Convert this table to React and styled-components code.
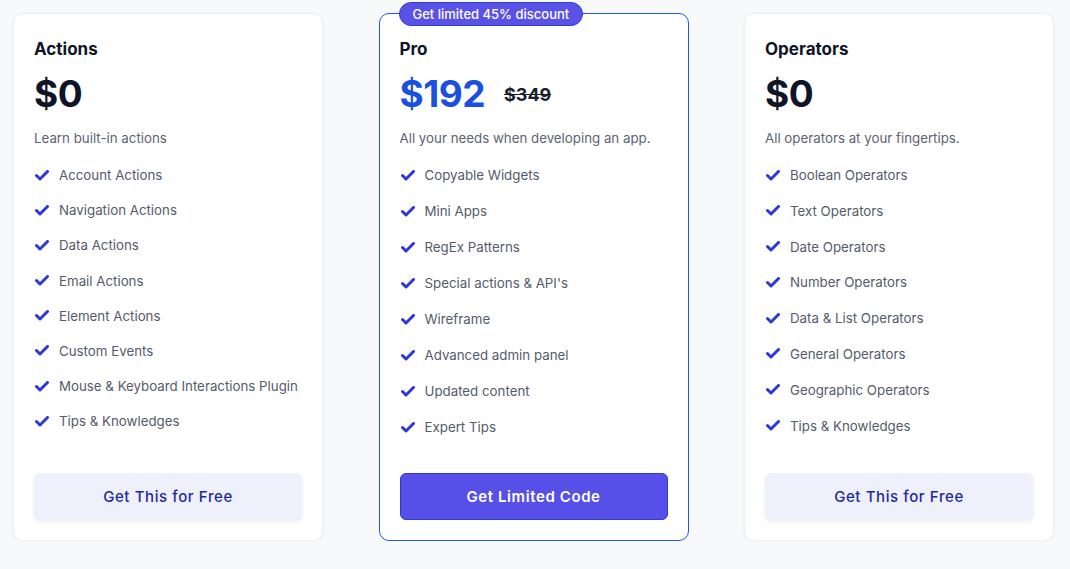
import React from "react";
import styled, { createGlobalStyle } from "styled-components";

const plans = [
  {
    name: "Actions",
    price: "$0",
    note: "Learn built-in actions",
    features: [
      "Account Actions",
      "Navigation Actions",
      "Data Actions",
      "Email Actions",
      "Element Actions",
      "Custom Events",
      "Mouse & Keyboard Interactions Plugin",
      "Tips & Knowledges",
    ],
    cta: "Get This for Free",
    rowGap: 15.2,
  },
  {
    name: "Pro",
    price: "$192",
    oldPrice: "$349",
    badge: "Get limited 45% discount",
    note: "All your needs when developing an app.",
    features: [
      "Copyable Widgets",
      "Mini Apps",
      "RegEx Patterns",
      "Special actions & API's",
      "Wireframe",
      "Advanced admin panel",
      "Updated content",
      "Expert Tips",
    ],
    cta: "Get Limited Code",
    featured: true,
    rowGap: 16,
  },
  {
    name: "Operators",
    price: "$0",
    note: "All operators at your fingertips.",
    features: [
      "Boolean Operators",
      "Text Operators",
      "Date Operators",
      "Number Operators",
      "Data & List Operators",
      "General Operators",
      "Geographic Operators",
      "Tips & Knowledges",
    ],
    cta: "Get This for Free",
    rowGap: 15.8,
  },
];

const Check = () => (
  <svg width="14" height="11" viewBox="0 0 14 11">
    <path
      d="M1.5 5.5 L5 9 L12.5 1.5"
      fill="none"
      stroke="#2c39d6"
      strokeWidth="3"
      strokeLinecap="round"
      strokeLinejoin="round"
    />
  </svg>
);

export default function App() {
  return (
    <>
      <GlobalStyle />
      <Page>
        {plans.map((plan) => (
          <Card key={plan.name} $featured={plan.featured}>
            {plan.badge && <Badge>{plan.badge}</Badge>}
            <PlanName>{plan.name}</PlanName>
            <PriceRow>
              <Price $featured={plan.featured}>{plan.price}</Price>
              {plan.oldPrice && <OldPrice>{plan.oldPrice}</OldPrice>}
            </PriceRow>
            <Note>{plan.note}</Note>
            <Features $gap={plan.rowGap}>
              {plan.features.map((f) => (
                <Feature key={f}>
                  <Check />
                  {f}
                </Feature>
              ))}
            </Features>
            <CtaButton $featured={plan.featured}>{plan.cta}</CtaButton>
          </Card>
        ))}
      </Page>
    </>
  );
}

const GlobalStyle = createGlobalStyle`
  body {
    margin: 0;
    background: #f8f9fb;
    font-family: Inter, "Noto Sans", sans-serif;
  }
`;

const Page = styled.div`
  display: grid;
  grid-template-columns: repeat(3, 310px);
  column-gap: 55.5px;
  padding: 13px 0 0 13px;
`;

const Card = styled.div`
  position: relative;
  display: flex;
  flex-direction: column;
  height: 528px;
  box-sizing: border-box;
  padding: 24px 20px 20px;
  background: #fff;
  border-radius: 10px;
  border: 1px solid ${(p) => (p.$featured ? "#1d5bd8" : "#eef0f3")};
  box-shadow: ${(p) => (p.$featured ? "none" : "0 1px 4px rgba(20, 30, 60, 0.05)")};
`;

const Badge = styled.div`
  position: absolute;
  top: -12px;
  left: 19px;
  padding: 2px 13px;
  background: #5a52e6;
  border: 1px solid #2a3fd6;
  border-radius: 12px;
  color: #fff;
  font-size: 13px;
  line-height: 18px;
  font-weight: 500;
`;

const PlanName = styled.h3`
  margin: 0;
  font-size: 17px;
  line-height: 22px;
  font-weight: 700;
  color: #0f1426;
`;

const PriceRow = styled.div`
  display: flex;
  align-items: center;
  gap: 19px;
  margin-top: 12px;
`;

const Price = styled.div`
  font-size: 37px;
  line-height: 44px;
  font-weight: 700;
  letter-spacing: -0.5px;
  color: ${(p) => (p.$featured ? "#1a4fe0" : "#0f1426")};
`;

const OldPrice = styled.s`
  font-size: 18px;
  font-weight: 700;
  color: #1a1f2e;
`;

const Note = styled.p`
  margin: 12px 0 0;
  font-size: 13.3px;
  line-height: 20px;
  color: #5d6373;
`;

const Features = styled.ul`
  list-style: none;
  margin: 17px 0 0;
  padding: 0 0 0 1px;
  display: flex;
  flex-direction: column;
  gap: ${(p) => p.$gap}px;
`;

const Feature = styled.li`
  display: flex;
  align-items: center;
  gap: 10px;
  font-size: 13.3px;
  line-height: 20px;
  white-space: nowrap;
  color: #555b6b;
`;

const CtaButton = styled.button`
  margin-top: auto;
  height: 47px;
  border-radius: 6px;
  font-family: inherit;
  font-size: 15px;
  letter-spacing: 0.6px;
  cursor: pointer;
  background: ${(p) => (p.$featured ? "#5650e8" : "#eef0fc")};
  color: ${(p) => (p.$featured ? "#fff" : "#1e2a9c")};
  font-weight: ${(p) => (p.$featured ? 600 : 500)};
  border: 1px solid ${(p) => (p.$featured ? "#2b3bd4" : "transparent")};
  box-shadow: ${(p) => (p.$featured ? "none" : "0 2px 4px rgba(30, 40, 90, 0.08)")};
`;
